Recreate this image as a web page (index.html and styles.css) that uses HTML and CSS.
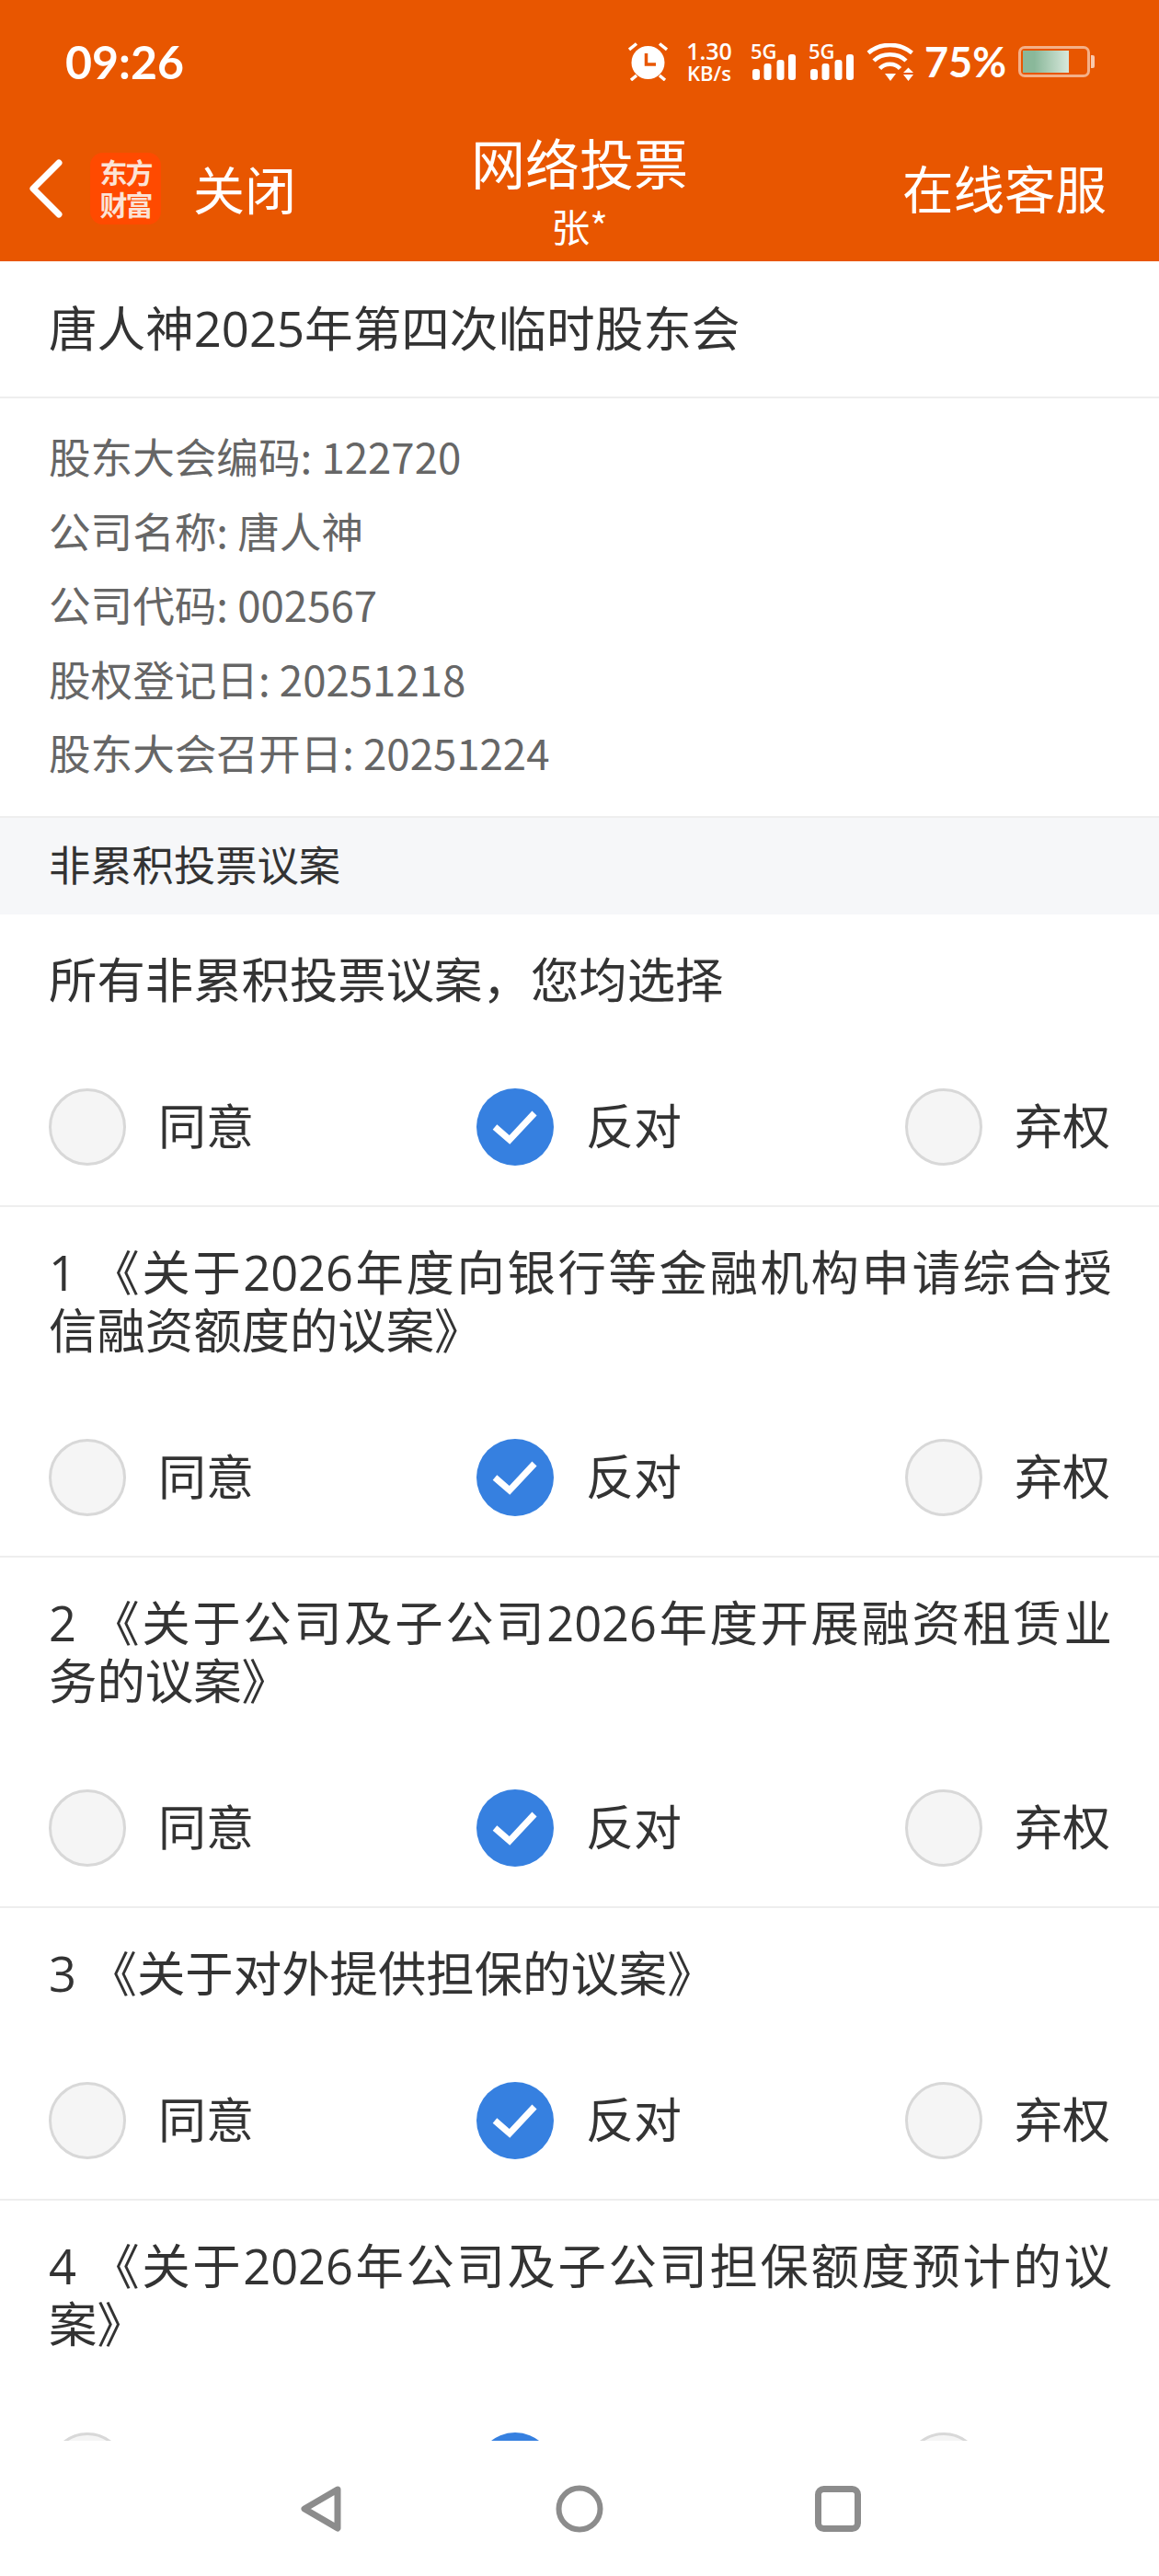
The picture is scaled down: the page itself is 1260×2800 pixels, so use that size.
FILE: index.html
```html
<!DOCTYPE html>
<html lang="zh-CN">
<head>
  <meta charset="UTF-8" />
  <title>网络投票</title>
  <link rel="stylesheet" href="styles.css">
</head>
<body>
  <header class="top">
    <div class="status">
      <span class="time">09:26</span>
      <div class="status-icons">
        <svg class="alarm" width="43" height="42" viewBox="0 0 43 42">
          <circle cx="21.5" cy="22" r="18" fill="#fff"/>
          <path d="M19.5 12v12H30" fill="none" stroke="#e85600" stroke-width="3.5"/>
          <path d="M1 8 9 1.5M42 8 34 1.5M3 41l6-5M40 41l-6-5" fill="none" stroke="#fff" stroke-width="3.5"/>
        </svg>
        <div class="speed"><span>1.30</span><span class="unit">KB/s</span></div>
        <div class="signal">
          <span class="net">5G</span>
          <svg width="47" height="28" viewBox="0 0 47 28">
            <rect x="0" y="16" width="8" height="12" rx="3" fill="#fff"/>
            <rect x="12.5" y="10" width="8" height="18" rx="3" fill="#fff"/>
            <rect x="26.5" y="6" width="8" height="22" rx="3" fill="#fff"/>
            <rect x="39" y="0" width="8" height="28" rx="3" fill="#fff"/>
          </svg>
        </div>
        <div class="signal">
          <span class="net">5G</span>
          <svg width="47" height="28" viewBox="0 0 47 28">
            <rect x="0" y="16" width="8" height="12" rx="3" fill="#fff"/>
            <rect x="12.5" y="10" width="8" height="18" rx="3" fill="#fff"/>
            <rect x="26.5" y="6" width="8" height="22" rx="3" fill="#fff"/>
            <rect x="39" y="0" width="8" height="28" rx="3" fill="#fff"/>
          </svg>
        </div>
        <svg class="wifi" width="51" height="41" viewBox="0 0 51 41">
          <path d="M2 10.5C15 -1 36 -1 49.500 10.500M8 19C17 10 34 10 43 19M14.500 27.500C20 21 31 21 36.500 27.500" fill="none" stroke="#fff" stroke-width="4.5"/>
          <path d="M20 33h12l-6 8zM40 32l5.500-5.500L51 32zM40 34h11l-5.500 7z" fill="#fff"/>
        </svg>
        <span class="pct">75%</span>
        <div class="battery"><div class="battery-fill"></div></div>
        <div class="battery-tip"></div>
      </div>
    </div>
    <div class="nav">
      <div class="nav-left">
        <svg class="back" width="38" height="66" viewBox="0 0 38 66">
          <path d="M33 5 5 33l28 28" fill="none" stroke="#fff" stroke-width="7" stroke-linecap="round" stroke-linejoin="round"/>
        </svg>
        <div class="logo">东方<br>财富</div>
        <span class="close">关闭</span>
      </div>
      <div class="nav-title">
        <div class="title-main">网络投票</div>
        <div class="title-sub">张*</div>
      </div>
      <span class="service">在线客服</span>
    </div>
  </header>

  <main class="content">
    <h1 class="meeting">唐人神<span class="num">2025</span>年第四次临时股东会</h1>
    <div class="info">
      <p>股东大会编码: 122720</p>
      <p>公司名称: 唐人神</p>
      <p>公司代码: 002567</p>
      <p>股权登记日: 20251218</p>
      <p>股东大会召开日: 20251224</p>
    </div>
    <div class="section">非累积投票议案</div>

    <div class="item">
      <div class="question">所有非累积投票议案，您均选择</div>
      <div class="options">
        <div class="option"><span class="radio"></span><span class="label">同意</span></div>
        <div class="option"><span class="radio on"><svg width="84" height="84" viewBox="0 0 84 84"><path d="M20 42l16 14 27-29" fill="none" stroke="#fff" stroke-width="7"/></svg></span><span class="label">反对</span></div>
        <div class="option"><span class="radio"></span><span class="label">弃权</span></div>
      </div>
    </div>

    <div class="item">
      <div class="question">1 《关于2026年度向银行等金融机构申请综合授信融资额度的议案》</div>
      <div class="options">
        <div class="option"><span class="radio"></span><span class="label">同意</span></div>
        <div class="option"><span class="radio on"><svg width="84" height="84" viewBox="0 0 84 84"><path d="M20 42l16 14 27-29" fill="none" stroke="#fff" stroke-width="7"/></svg></span><span class="label">反对</span></div>
        <div class="option"><span class="radio"></span><span class="label">弃权</span></div>
      </div>
    </div>

    <div class="item">
      <div class="question">2 《关于公司及子公司2026年度开展融资租赁业务的议案》</div>
      <div class="options">
        <div class="option"><span class="radio"></span><span class="label">同意</span></div>
        <div class="option"><span class="radio on"><svg width="84" height="84" viewBox="0 0 84 84"><path d="M20 42l16 14 27-29" fill="none" stroke="#fff" stroke-width="7"/></svg></span><span class="label">反对</span></div>
        <div class="option"><span class="radio"></span><span class="label">弃权</span></div>
      </div>
    </div>

    <div class="item">
      <div class="question">3 《关于对外提供担保的议案》</div>
      <div class="options">
        <div class="option"><span class="radio"></span><span class="label">同意</span></div>
        <div class="option"><span class="radio on"><svg width="84" height="84" viewBox="0 0 84 84"><path d="M20 42l16 14 27-29" fill="none" stroke="#fff" stroke-width="7"/></svg></span><span class="label">反对</span></div>
        <div class="option"><span class="radio"></span><span class="label">弃权</span></div>
      </div>
    </div>

    <div class="item">
      <div class="question">4 《关于2026年公司及子公司担保额度预计的议案》</div>
      <div class="options">
        <div class="option"><span class="radio"></span><span class="label">同意</span></div>
        <div class="option"><span class="radio on"><svg width="84" height="84" viewBox="0 0 84 84"><path d="M20 42l16 14 27-29" fill="none" stroke="#fff" stroke-width="7"/></svg></span><span class="label">反对</span></div>
        <div class="option"><span class="radio"></span><span class="label">弃权</span></div>
      </div>
    </div>
  </main>

  <footer class="navbar">
    <svg class="nav-back" width="44" height="50" viewBox="0 0 44 50">
      <path d="M40 4 4 25l36 21z" fill="none" stroke="#8c8c8c" stroke-width="7" stroke-linejoin="round"/>
    </svg>
    <svg class="nav-home" width="52" height="52" viewBox="0 0 52 52">
      <circle cx="26" cy="26" r="22.500" fill="none" stroke="#8c8c8c" stroke-width="6"/>
    </svg>
    <svg width="50" height="50" viewBox="0 0 50 50">
      <rect x="3.500" y="3.500" width="43" height="43" rx="6" fill="none" stroke="#8c8c8c" stroke-width="7"/>
    </svg>
  </footer>
</body>
</html>
```

FILE: styles.css
```css
* {
  box-sizing: border-box;
}

html,
body {
  height: 2800px;
}

body {
  margin: 0;
  background-color: #fff;
  color: #333;
  font-family: "Noto Sans CJK SC", "Noto Sans", sans-serif;
  overflow: hidden;
}

.top {
  height: 284px;
  background-color: #e85600;
  color: #fff;
}

.status {
  height: 134px;
  padding: 0 70px 0 71px;
  display: flex;
  justify-content: space-between;
  align-items: center;
}

.time {
  font-family: Lato, sans-serif;
  font-size: 50px;
  font-weight: 700;
}

.status-icons {
  display: flex;
  align-items: center;
}

.alarm {
  margin-right: 20px;
}

.speed {
  width: 50px;
  margin-right: 20px;
  display: flex;
  flex-direction: column;
  align-items: center;
  font-family: "Open Sans", sans-serif;
  font-size: 25px;
  font-weight: 600;
  line-height: 24px;
  white-space: nowrap;
}

.speed .unit {
  font-size: 22px;
}

.signal {
  width: 49px;
  margin-right: 14px;
  display: flex;
  flex-direction: column;
}

.net {
  font-family: "Open Sans", sans-serif;
  font-size: 22px;
  font-weight: 600;
  line-height: 16px;
}

.signal svg {
  display: block;
  margin: -4px 0 0 2px;
}

.wifi {
  margin-right: 12px;
}

.pct {
  width: 87px;
  margin-right: 15px;
  font-family: Lato, sans-serif;
  font-size: 45px;
  font-weight: 700;
  white-space: nowrap;
}

.battery {
  width: 78px;
  height: 34px;
  padding: 2px;
  border: 3px solid #f4b088;
  border-radius: 7px;
}

.battery-fill {
  width: 50px;
  height: 100%;
  background: linear-gradient(90deg, #8ab89a 25%, #d8e8dc);
}

.battery-tip {
  width: 4px;
  height: 14px;
  margin-left: 1px;
  background-color: #f9c9ac;
  border-radius: 0 2px 2px 0;
}

.nav {
  height: 150px;
  padding: 0 57px 8px 31px;
  display: flex;
  justify-content: space-between;
  align-items: center;
  position: relative;
}

.nav-left {
  display: flex;
  align-items: center;
}

.back {
  margin-right: 29px;
}

.logo {
  width: 77px;
  height: 78px;
  margin-right: 35px;
  padding-top: 3px;
  background-color: #ff4a00;
  border-radius: 14px;
  color: #fbe3d6;
  font-size: 30px;
  font-weight: 700;
  letter-spacing: -2px;
  line-height: 35px;
  text-align: center;
}

.close {
  padding-bottom: 4px;
  font-size: 56px;
}

.nav-title {
  position: absolute;
  left: 0;
  right: 0;
  top: 6px;
  text-align: center;
}

.title-main {
  font-size: 59px;
  line-height: 72px;
}

.title-sub {
  margin-top: 10px;
  font-size: 42px;
  line-height: 46px;
}

.service {
  padding-bottom: 4px;
  font-size: 55.500px;
}

.content {
  height: 2369px;
  overflow: hidden;
}

.meeting {
  margin: 0;
  height: 149px;
  padding-left: 53px;
  border-bottom: 2px solid #eee;
  font-size: 52.600px;
  font-weight: 400;
  line-height: 141px;
}

.num {
  font-family: "Open Sans", sans-serif;
}

.info {
  height: 454px;
  padding: 22px 53px 0;
  color: #666;
  font-size: 45.600px;
  line-height: 80.600px;
}

.info p {
  margin: 0;
}

.section {
  height: 107px;
  padding-left: 53px;
  background-color: #f6f7f9;
  border-top: 2px solid #eee;
  font-size: 45.300px;
  line-height: 99px;
}

.item {
  padding: 39px 51px 43px 53px;
  border-bottom: 2px solid #eee;
}

.question {
  margin-bottom: 87px;
  font-family: "Open Sans", "Noto Sans CJK SC", sans-serif;
  font-size: 52.400px;
  line-height: 63px;
  text-align: justify;
}

.options {
  display: grid;
  grid-template-columns: 465px 466px auto;
}

.option {
  display: flex;
  align-items: center;
  font-size: 52px;
  line-height: 84px;
  white-space: nowrap;
}

.label {
  padding-bottom: 6px;
  line-height: 78px;
}

.radio {
  width: 84px;
  height: 84px;
  margin-right: 35px;
  background-color: #f5f5f5;
  border: 3px solid #d8d8d8;
  border-radius: 50%;
  flex-shrink: 0;
}

.radio.on {
  background-color: #3680e0;
  border: none;
}

.radio svg {
  display: block;
}

.navbar {
  height: 147px;
  padding-left: 3px;
  background-color: #fff;
  display: flex;
  justify-content: center;
  align-items: center;
}

.nav-back {
  margin-right: 233px;
}

.nav-home {
  margin-right: 230px;
}
```
